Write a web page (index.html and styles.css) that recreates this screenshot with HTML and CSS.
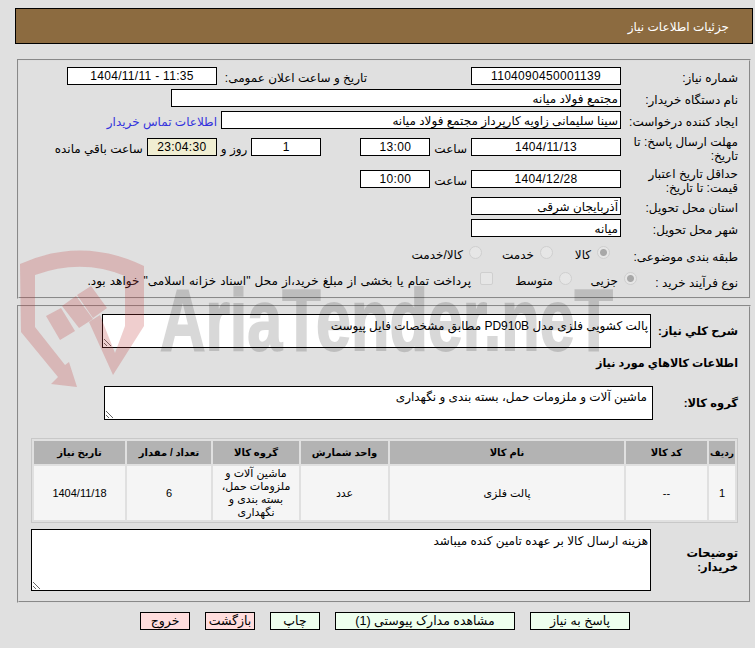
FILE: index.html
```html
<!DOCTYPE html>
<html lang="fa" dir="rtl">
<head>
    <meta charset="UTF-8">
    <title>جزئیات اطلاعات نیاز</title>
    <link rel="stylesheet" href="styles.css">
</head>
<body>
    <div class="page">
        <div class="header">جزئیات اطلاعات نیاز</div>

        <div class="panel panel-top">
            <div class="row">
                <label class="label">شماره نیاز:</label>
                <input class="field field-center w150" value="1104090450001139" readonly>
                <label class="label label-public">تاریخ و ساعت اعلان عمومی:</label>
                <input class="field field-center w150" value="11:35 - 1404/11/11" readonly>
            </div>
            <div class="row">
                <label class="label">نام دستگاه خریدار:</label>
                <input class="field w450" value="مجتمع فولاد میانه" readonly>
            </div>
            <div class="row">
                <label class="label">ایجاد کننده درخواست:</label>
                <input class="field w400" value="سینا سلیمانی زاویه کارپرداز مجتمع فولاد میانه" readonly>
                <a class="contact" href="#">اطلاعات تماس خریدار</a>
            </div>
            <div class="row row-tall">
                <label class="label">مهلت ارسال پاسخ: تا تاریخ:</label>
                <input class="field field-center w150" value="1404/11/13" readonly>
                <span class="unit">ساعت</span>
                <input class="field field-center w70" value="13:00" readonly>
                <input class="field field-center w70 days" value="1" readonly>
                <span class="unit">روز و</span>
                <input class="field field-center w70 timer" value="23:04:30" readonly>
                <span class="unit">ساعت باقي مانده</span>
            </div>
            <div class="row row-tall">
                <label class="label">حداقل تاریخ اعتبار قیمت: تا تاریخ:</label>
                <input class="field field-center w150" value="1404/12/28" readonly>
                <span class="unit">ساعت</span>
                <input class="field field-center w70" value="10:00" readonly>
            </div>
            <div class="row">
                <label class="label">استان محل تحویل:</label>
                <input class="field w150" value="آذربایجان شرقی" readonly>
            </div>
            <div class="row">
                <label class="label">شهر محل تحویل:</label>
                <input class="field w150" value="میانه" readonly>
            </div>
            <div class="row row-options row-subject">
                <label class="label">طبقه بندی موضوعی:</label>
                <span class="option w57"><input type="radio" name="subject" checked disabled>کالا</span>
                <span class="option w71"><input type="radio" name="subject" disabled>خدمت</span>
                <span class="option"><input type="radio" name="subject" disabled>کالا/خدمت</span>
            </div>
            <div class="row row-options row-process">
                <label class="label">نوع فرآیند خرید :</label>
                <span class="option w65"><input type="radio" name="process" checked disabled>جزیی</span>
                <span class="option w79"><input type="radio" name="process" disabled>متوسط</span>
                <span class="option option-long"><input type="checkbox" disabled>پرداخت تمام یا بخشی از مبلغ خرید،از محل "اسناد خزانه اسلامی" خواهد بود.</span>
            </div>
        </div>

        <div class="panel panel-bottom">
            <div class="row row-area">
                <label class="label label-bold w87">شرح کلي نیاز:</label>
                <textarea class="area w549 h34" readonly>پالت کشویی فلزی مدل PD910B مطابق مشخصات فایل پیوست</textarea>
            </div>
            <div class="section-title">اطلاعات کالاهاي مورد نياز</div>
            <div class="row row-area">
                <label class="label label-bold w85">گروه کالا:</label>
                <textarea class="area w549 h34 area-group" readonly>ماشین آلات و ملزومات حمل، بسته بندی و نگهداری</textarea>
            </div>

            <table class="items">
                <colgroup>
                    <col class="c-row"><col class="c-code"><col class="c-name"><col class="c-unit"><col class="c-group"><col class="c-qty"><col class="c-date">
                </colgroup>
                <thead>
                    <tr>
                        <th class="head-row">ردیف</th>
                        <th>کد کالا</th>
                        <th>نام کالا</th>
                        <th>واحد شمارش</th>
                        <th>گروه کالا</th>
                        <th>تعداد / مقدار</th>
                        <th>تاریخ نیاز</th>
                    </tr>
                </thead>
                <tbody>
                    <tr>
                        <td>1</td>
                        <td>--</td>
                        <td>پالت فلزی</td>
                        <td>عدد</td>
                        <td class="cell-group">ماشین آلات و ملزومات حمل، بسته بندی و نگهداری</td>
                        <td>6</td>
                        <td>1404/11/18</td>
                    </tr>
                </tbody>
            </table>

            <div class="row row-area row-notes">
                <label class="label label-bold w87">توضیحات خریدار:</label>
                <textarea class="area w620 h62" readonly>هزینه ارسال کالا بر عهده تامین کنده میباشد</textarea>
            </div>
        </div>

        <div class="actions">
            <button class="btn btn-green w100">پاسخ به نیاز</button>
            <button class="btn btn-green w180">مشاهده مدارک پیوستی (1)</button>
            <button class="btn btn-green w50">چاپ</button>
            <button class="btn btn-red w50">بازگشت</button>
            <button class="btn btn-red w50">خروج</button>
        </div>
    </div>

    <svg class="watermark" width="755" height="648" viewBox="0 0 755 648" aria-hidden="true">
        <path class="mark-shield" d="M20 264 Q82 236 144 266 L144 326 L113 375 L89 322 L100 315 L115 353 L125 326 L125 276 Q82 258 35 275 L35 327 L65 365 L69 362 L77 387 L51 384 L58 377 L21 332 Z"/>
        <path class="mark-shield" d="M46 316 L61 308 L75 331 L60 340 Z M62 306 L76 296 L93 319 L79 328 Z M77 295 L91 286 L107 308 L93 318 Z"/>
        <text class="mark-text" x="160" y="350" textLength="453" lengthAdjust="spacingAndGlyphs">AriaTender.neT</text>
    </svg>
</body>
</html>
```

FILE: styles.css
```css
* {
    box-sizing: border-box;
}
body {
    margin: 0;
    background: #e0e0e0;
    font-family: "Liberation Sans", "DejaVu Sans", sans-serif;
    font-size: 12px;
    color: #000;
}
.watermark {
    position: absolute;
    left: 0;
    top: 0;
    z-index: 1;
    direction: ltr;
    pointer-events: none;
}
.mark-shield {
    fill: rgba(190, 60, 60, 0.25);
}
.mark-text {
    font-family: "Liberation Sans", sans-serif;
    font-size: 88px;
    font-weight: bold;
    fill: #000;
    stroke: #000;
    stroke-width: 2px;
    opacity: 0.15;
}
.page {
    padding: 8px 2px 0 15px;
}
.header {
    height: 36px;
    background: #8c6b40;
    border: 1px solid #000;
    color: #fff;
    padding-right: 23px;
    line-height: 36px;
    font-size: 12px;
}
.panel {
    margin: 15px 2px 0 0;
    width: 734px;
    border: 2px groove #ddd;
}
.panel-top {
    height: 240px;
    padding: 6px 11px 0 0;
}
.panel-bottom {
    margin-top: 6px;
    height: 298px;
    padding: 7px 11px 0 0;
}
.row {
    display: flex;
    align-items: center;
    min-height: 18px;
    margin-bottom: 4px;
}
.row-tall {
    min-height: 28px;
}
.label {
    flex: none;
    width: 117px;
    padding-top: 3px;
    line-height: 14px;
}
.row-tall .label {
    padding-top: 2px;
    margin-bottom: -2px;
}
.row-area .label {
    padding-top: 0;
}
.label-public {
    width: 145px;
    margin: 0 104px 0 5px;
    white-space: nowrap;
}
.label-bold {
    font-weight: bold;
    font-size: 11.5px;
}
.field {
    flex: none;
    height: 18px;
    border: 1px solid #000;
    background: #fff;
    padding: 2px 2px 0;
    font: inherit;
    color: #000;
    outline: none;
}
.field-center {
    padding: 0 2px;
    text-align: center;
    letter-spacing: 0.3px;
}
.w150 { width: 150px; }
.w400 { width: 400px; }
.w450 { width: 450px; }
.w70 { width: 70px; }
.w85 { width: 85px; }
.w87 { width: 87px; }
.w57 { width: 57px; }
.w71 { width: 71px; }
.w65 { width: 65px; }
.w79 { width: 79px; }
.w549 { width: 549px; }
.w620 { width: 620px; }
.w50 { width: 50px; }
.w100 { width: 100px; }
.w180 { width: 180px; }
.h34 { height: 34px; }
.h62 { height: 62px; }
.contact {
    margin-right: 4px;
    padding-top: 3px;
    color: #3333dd;
    text-decoration: none;
    white-space: nowrap;
}
.unit {
    flex: none;
    margin: 0 4px;
    padding-top: 3px;
    white-space: nowrap;
}
.days {
    margin-right: 39px;
}
.timer {
    background: #f0eed2;
}
.row-options {
    height: 22px;
}
.row-subject {
    margin-top: 7px;
}
.row-subject .label {
    width: 128px;
}
.row-process .label {
    width: 101px;
}
.option {
    display: flex;
    align-items: center;
    flex: none;
    white-space: nowrap;
}
.option-long {
    word-spacing: 0.8px;
}
.option input {
    appearance: none;
    flex: none;
    width: 13px;
    height: 13px;
    margin: -6px 0 0 6px;
    background: #e6e6e6;
    border: 1px solid #cfcfcf;
    border-radius: 50%;
}
.option input[type="radio"]:checked {
    background: radial-gradient(circle, #a8a8a8 0 3px, #e6e6e6 4px);
}
.option input[type="checkbox"] {
    border-radius: 2px;
    margin-left: 9px;
}
.row-area {
    margin-bottom: 0;
}
.area {
    flex: none;
    display: block;
    border: 1px solid #000;
    background: #fff;
    padding: 4px 2px;
    font: inherit;
    color: #000;
    outline: none;
}
.area-group {
    padding: 3px 5px;
}
.section-title {
    height: 38px;
    font-size: 11.2px;
    font-weight: bold;
    line-height: 30px;
}
.items {
    width: 707px;
    margin: 18px 0 0 0;
    table-layout: fixed;
    border: 1px solid #c8c8c8;
    border-spacing: 2px;
    text-align: center;
}
.items th {
    height: 23px;
    padding: 0;
    background: #b3b3b3;
    font-weight: bold;
    font-size: 10px;
}
.items .head-row {
    font-size: 9px;
}
.items td {
    height: 54px;
    padding: 0 2px;
    background: #f5f5f5;
    font-size: 11px;
    line-height: 13px;
}
.cell-group {
    padding: 0 8px;
}
.c-row { width: 26px; }
.c-code { width: 81px; }
.c-name { width: 234px; }
.c-unit { width: 87px; }
.c-group { width: 86px; }
.c-qty { width: 84px; }
.c-date { width: 91px; }
.row-notes {
    margin-top: 6px;
}
.actions {
    display: flex;
    justify-content: center;
    gap: 15px;
    margin-top: 9px;
    padding-left: 2px;
}
.btn {
    height: 18px;
    padding: 0;
    border: 1px solid #000;
    font: inherit;
    font-size: 12.5px;
    color: #000;
    line-height: 14px;
}
.btn-green {
    background: #eeffee;
}
.btn-red {
    background: #ffdddd;
}
```
